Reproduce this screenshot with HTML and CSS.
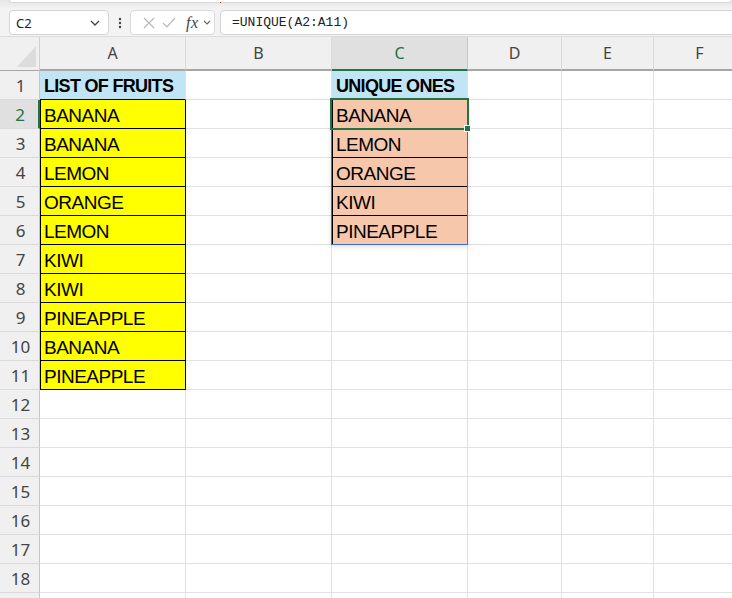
FILE: index.html
```html
<!DOCTYPE html>
<html>
<head>
<meta charset="utf-8">
<link rel="stylesheet" href="styles.css">
</head>
<body>
<div class="app">
  <div class="ribbon-edge">
    <div class="ribbon-panel"></div>
    <span class="red-dot"></span>
  </div>
  <div class="formula-bar">
    <div class="namebox">
      <span class="name">C2</span>
      <svg class="chev" width="10" height="6" viewBox="0 0 10 6"><path d="M1 1l4 4 4-4" fill="none" stroke="#444" stroke-width="1.3"/></svg>
    </div>
    <div class="dots">
      <svg width="4" height="12" viewBox="0 0 4 12"><circle cx="2" cy="2" r="1.2" fill="#444"/><circle cx="2" cy="6" r="1.2" fill="#444"/><circle cx="2" cy="10" r="1.2" fill="#444"/></svg>
    </div>
    <div class="fxbox">
      <svg class="ico" width="12" height="12" viewBox="0 0 12 12"><path d="M1 1l10 10M11 1L1 11" stroke="#b8b8b8" stroke-width="1.2" fill="none"/></svg>
      <svg class="ico" width="14" height="11" viewBox="0 0 14 11"><path d="M1 6l4 4 8-9" stroke="#b8b8b8" stroke-width="1.2" fill="none"/></svg>
      <span class="fx">fx</span>
      <svg class="chev2" width="8" height="5" viewBox="0 0 8 5"><path d="M1 1l3 3 3-3" fill="none" stroke="#666" stroke-width="1.1"/></svg>
    </div>
    <div class="formula-input">=UNIQUE(A2:A11)</div>
  </div>
  <div class="sheet">
    <div class="corner"><span class="tri"></span></div>
    <div class="ch">A</div>
    <div class="ch">B</div>
    <div class="ch ch-sel">C</div>
    <div class="ch">D</div>
    <div class="ch">E</div>
    <div class="ch">F</div>

    <div class="rh">1</div>
    <div class="c hdr-a">LIST OF FRUITS</div>
    <div class="c"></div>
    <div class="c hdr-c">UNIQUE ONES</div>
    <div class="c"></div><div class="c"></div><div class="c"></div>

    <div class="rh rh-sel">2</div>
    <div class="c yel">BANANA</div>
    <div class="c"></div>
    <div class="c pea">BANANA</div>
    <div class="c"></div><div class="c"></div><div class="c"></div>

    <div class="rh">3</div>
    <div class="c yel">BANANA</div>
    <div class="c"></div>
    <div class="c pea">LEMON</div>
    <div class="c"></div><div class="c"></div><div class="c"></div>

    <div class="rh">4</div>
    <div class="c yel">LEMON</div>
    <div class="c"></div>
    <div class="c pea">ORANGE</div>
    <div class="c"></div><div class="c"></div><div class="c"></div>

    <div class="rh">5</div>
    <div class="c yel">ORANGE</div>
    <div class="c"></div>
    <div class="c pea">KIWI</div>
    <div class="c"></div><div class="c"></div><div class="c"></div>

    <div class="rh">6</div>
    <div class="c yel">LEMON</div>
    <div class="c"></div>
    <div class="c pea">PINEAPPLE</div>
    <div class="c"></div><div class="c"></div><div class="c"></div>

    <div class="rh">7</div>
    <div class="c yel">KIWI</div>
    <div class="c"></div><div class="c"></div><div class="c"></div><div class="c"></div><div class="c"></div>

    <div class="rh">8</div>
    <div class="c yel">KIWI</div>
    <div class="c"></div><div class="c"></div><div class="c"></div><div class="c"></div><div class="c"></div>

    <div class="rh">9</div>
    <div class="c yel">PINEAPPLE</div>
    <div class="c"></div><div class="c"></div><div class="c"></div><div class="c"></div><div class="c"></div>

    <div class="rh">10</div>
    <div class="c yel">BANANA</div>
    <div class="c"></div><div class="c"></div><div class="c"></div><div class="c"></div><div class="c"></div>

    <div class="rh">11</div>
    <div class="c yel">PINEAPPLE</div>
    <div class="c"></div><div class="c"></div><div class="c"></div><div class="c"></div><div class="c"></div>

    <div class="rh">12</div>
    <div class="c"></div><div class="c"></div><div class="c"></div><div class="c"></div><div class="c"></div><div class="c"></div>
    <div class="rh">13</div>
    <div class="c"></div><div class="c"></div><div class="c"></div><div class="c"></div><div class="c"></div><div class="c"></div>
    <div class="rh">14</div>
    <div class="c"></div><div class="c"></div><div class="c"></div><div class="c"></div><div class="c"></div><div class="c"></div>
    <div class="rh">15</div>
    <div class="c"></div><div class="c"></div><div class="c"></div><div class="c"></div><div class="c"></div><div class="c"></div>
    <div class="rh">16</div>
    <div class="c"></div><div class="c"></div><div class="c"></div><div class="c"></div><div class="c"></div><div class="c"></div>
    <div class="rh">17</div>
    <div class="c"></div><div class="c"></div><div class="c"></div><div class="c"></div><div class="c"></div><div class="c"></div>
    <div class="rh">18</div>
    <div class="c"></div><div class="c"></div><div class="c"></div><div class="c"></div><div class="c"></div><div class="c"></div>
    <div class="rh"></div>
    <div class="c"></div><div class="c"></div><div class="c"></div><div class="c"></div><div class="c"></div><div class="c"></div>

    <div class="spill"></div>
    <div class="selection"><span class="handle"></span></div>
  </div>
</div>
</body>
</html>
```

FILE: styles.css
```css
html, body {
  margin: 0;
  padding: 0;
  background: #ffffff;
}
body {
  width: 732px;
  height: 598px;
  overflow: hidden;
}
.app {
  width: 732px;
  height: 598px;
  overflow: hidden;
  background: #f3f3f3;
}
.ribbon-edge {
  position: relative;
  height: 9px;
  padding-left: 9px;
  background: linear-gradient(#e6e6e6, #f3f3f3);
}
.ribbon-panel {
  height: 2px;
  background: #ffffff;
  border: 1px solid #d6d6d6;
  border-top: none;
  border-radius: 0 0 5px 5px;
}
.red-dot {
  position: absolute;
  left: 220px;
  top: 2px;
  width: 1px;
  height: 1px;
  background: #e02020;
}
.formula-bar {
  display: flex;
  align-items: flex-start;
  height: 28px;
  padding-top: 1px;
  padding-left: 9px;
  border-bottom: 1px solid #dcdcdc;
  box-sizing: border-box;
}
.namebox {
  box-sizing: border-box;
  width: 100px;
  height: 25px;
  background: #fff;
  border: 1px solid #d4d4d4;
  border-radius: 4px;
  display: flex;
  align-items: center;
  justify-content: space-between;
  padding: 0 8px 0 6px;
  font-family: "Noto Sans", "Liberation Sans", sans-serif;
  font-size: 13px;
  color: #222;
}
.dots {
  width: 21px;
  height: 25px;
  display: flex;
  justify-content: center;
  align-items: center;
}
.fxbox {
  box-sizing: border-box;
  width: 85px;
  height: 25px;
  background: #fff;
  border: 1px solid #dadada;
  border-radius: 4px;
  display: flex;
  align-items: center;
  padding-left: 12px;
  gap: 7px;
}
.fx {
  font-family: "Liberation Serif", serif;
  font-style: italic;
  font-size: 16px;
  color: #444;
  margin-left: 3px;
  letter-spacing: 0.5px;
}
.chev2 {
  margin-left: -3px;
}
.formula-input {
  box-sizing: border-box;
  margin-left: 5px;
  flex: 1;
  height: 25px;
  margin-right: -10px;
  background: #fff;
  border: 1px solid #d4d4d4;
  border-radius: 4px;
  padding-left: 11px;
  font-family: "Liberation Mono", monospace;
  font-size: 13px;
  line-height: 23px;
  color: #222;
}
.sheet {
  position: relative;
  display: grid;
  grid-template-columns: 40px 146px 146px 136px 94px 92px 92px;
  grid-template-rows: 34px repeat(19, 29px);
  background: #fff;
}
.corner {
  position: relative;
  background: #f0f0f0;
  border-right: 1px solid #d0d0d0;
  border-bottom: 1px solid #a6a6a6;
  box-sizing: border-box;
}
.tri {
  position: absolute;
  right: 3px;
  bottom: 3px;
  width: 0;
  height: 0;
  border-left: 19px solid transparent;
  border-bottom: 21px solid #dcdcdc;
}
.ch {
  box-sizing: border-box;
  background: #f0f0f0;
  border-right: 1px solid #dadada;
  border-bottom: 2px solid #a6a6a6;
  text-align: center;
  font-family: "Noto Sans", "Liberation Sans", sans-serif;
  font-size: 16px;
  line-height: 32px;
  color: #444;
}
.ch-sel {
  background: #e0e0e0;
  color: #217346;
  border-bottom: 2px solid #217346;
  border-right-color: #c6c6c6;
}
.rh {
  box-sizing: border-box;
  background: #f0f0f0;
  border-right: 1px solid #c6c6c6;
  border-bottom: 1px solid #dadada;
  text-align: center;
  font-family: "Noto Sans", "Liberation Sans", sans-serif;
  font-size: 17px;
  line-height: 30px;
  color: #444;
  padding-left: 2px;
}
.rh-sel {
  background: #e0e0e0;
  color: #217346;
  border-right: 2px solid #217346;
}
.c {
  box-sizing: border-box;
  border-right: 1px solid #e1e1e1;
  border-bottom: 1px solid #e1e1e1;
  font-family: "Liberation Sans", Arial, sans-serif;
  font-size: 19px;
  letter-spacing: -0.5px;
  line-height: 31px;
  padding-left: 4px;
  color: #000;
  white-space: nowrap;
  overflow: hidden;
}
.hdr-a, .hdr-c {
  background: #c1e5f5;
  font-weight: bold;
  font-size: 18px;
  letter-spacing: -0.7px;
  border-bottom-color: #000;
}
.yel {
  background: #ffff00;
  border-right-color: #000;
  border-bottom-color: #000;
  box-shadow: inset 1px 0 0 #000;
}
.pea {
  background: #f7c7ac;
  border-right-color: #000;
  border-bottom-color: #000;
  box-shadow: inset 1px 0 0 #000;
}
.spill {
  position: absolute;
  left: 331px;
  top: 62px;
  width: 137px;
  height: 146px;
  box-sizing: border-box;
  border: 1px solid #3a6fd0;
  box-shadow: 0 2px 5px rgba(0, 0, 0, 0.12);
  pointer-events: none;
}
.selection {
  position: absolute;
  left: 330px;
  top: 61px;
  width: 139px;
  height: 32px;
  box-sizing: border-box;
  border: 2px solid #217346;
  pointer-events: none;
}
.handle {
  position: absolute;
  right: -4px;
  bottom: -4px;
  width: 5px;
  height: 5px;
  background: #217346;
  border: 1px solid #fff;
}
```
